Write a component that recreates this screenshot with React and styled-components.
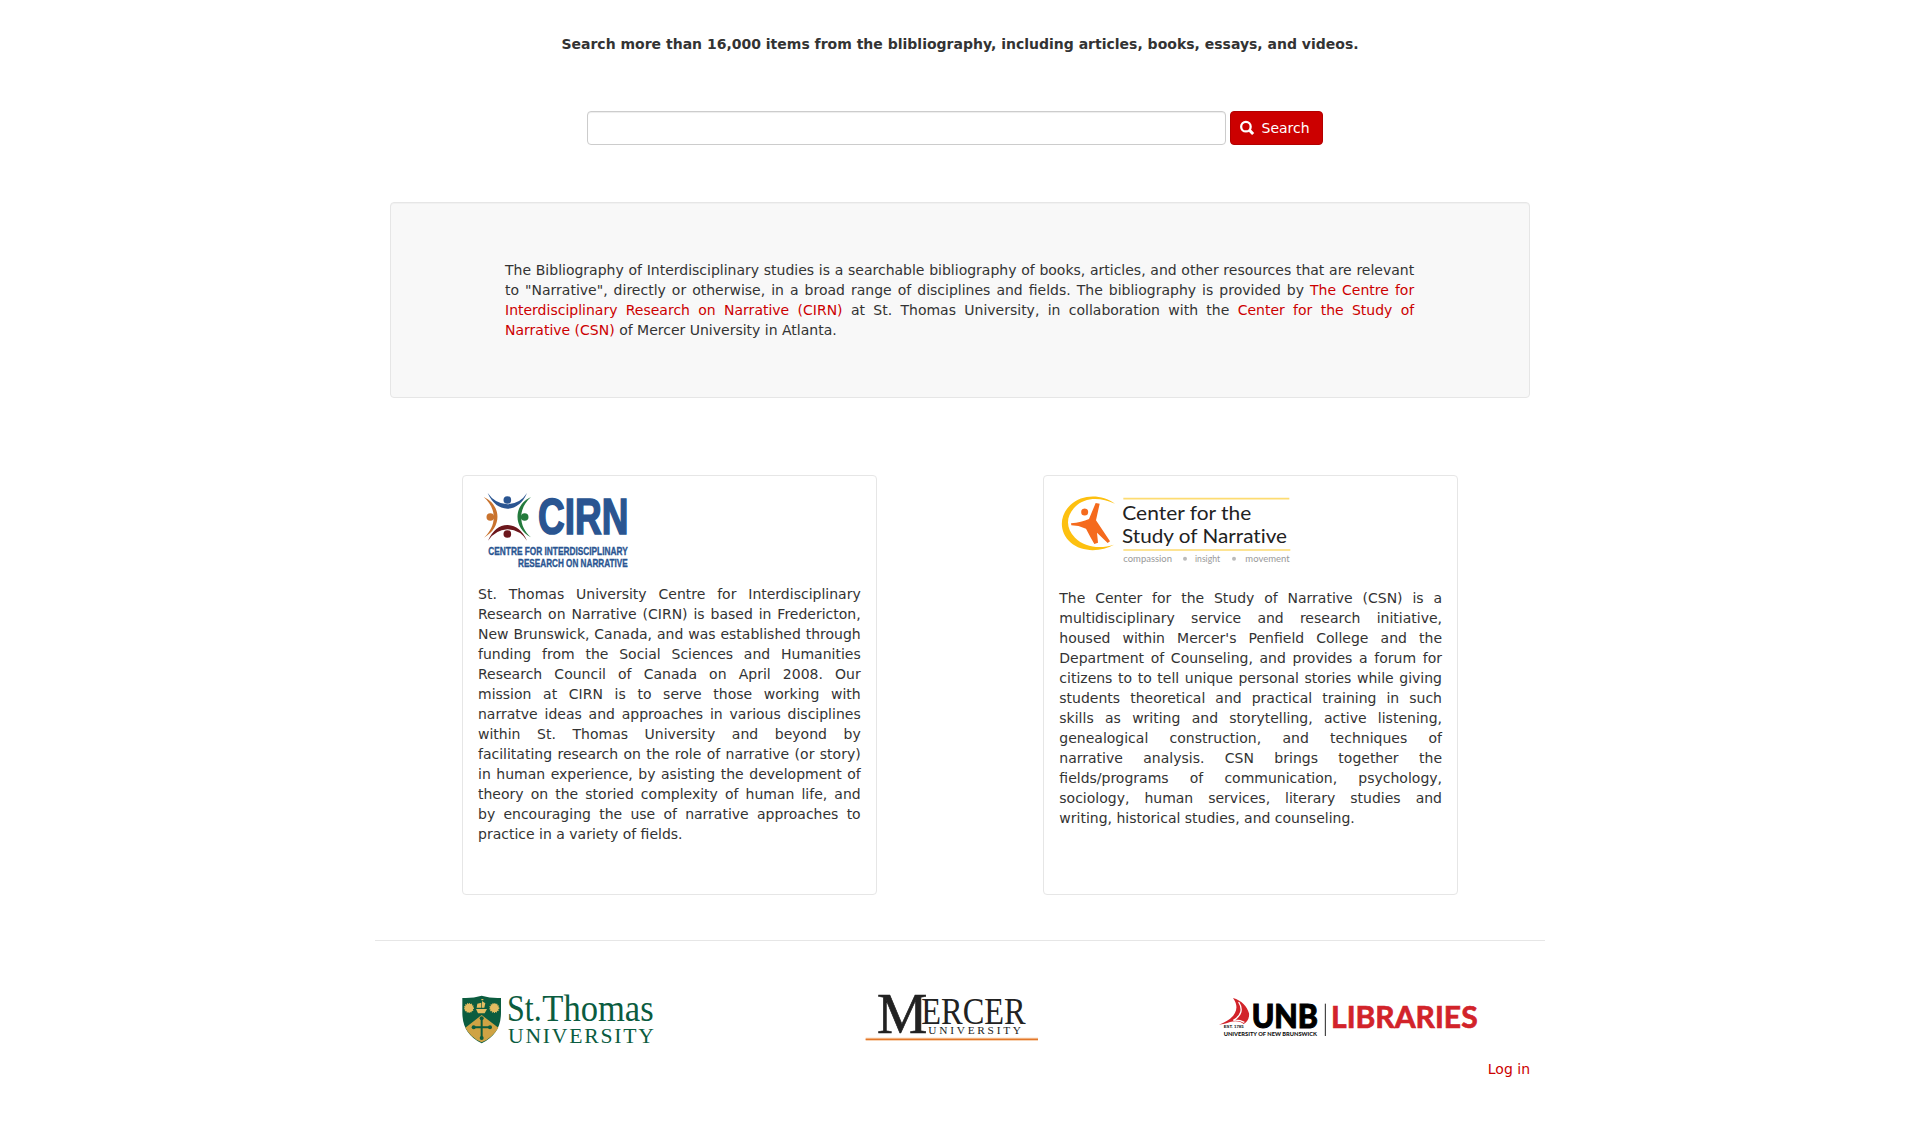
import React from "react";
import styled, { createGlobalStyle } from "styled-components";

const GlobalStyle = createGlobalStyle`
  *, *::before, *::after { box-sizing: border-box; }
  body {
    margin: 0;
    background: #fff;
    color: #333;
    font: 14px/20px "DejaVu Sans", sans-serif;
  }
`;

const Container = styled.main`
  width: 1170px;
  margin: 0 auto;
  padding: 34px 15px 0;
`;

const Tagline = styled.p`
  margin: 0;
  text-align: center;
  font-weight: bold;
`;

const SearchForm = styled.form`
  display: flex;
  gap: 4px;
  margin: 57px 0;
  padding-left: 197px;
`;

const SearchInput = styled.input`
  width: 639px;
  height: 34px;
  padding: 6px 12px;
  border: 1px solid #ccc;
  border-radius: 4px;
  background: #fff;
  box-shadow: inset 0 1px 1px rgba(0, 0, 0, 0.075);
  font: inherit;
`;

const SearchButton = styled.button`
  display: flex;
  align-items: center;
  gap: 7.5px;
  width: 93px;
  height: 34px;
  padding: 0 0 0 9px;
  border: 1px solid #b30000;
  border-radius: 4px;
  background: #c00;
  color: #fff;
  font: inherit;
`;

const Link = styled.a`
  color: #c00;
  text-decoration: none;
`;

const Well = styled.section`
  padding: 57px 114.8px 57px 114px;
  border: 1px solid #e6e6e6;
  border-radius: 4px;
  background: #f8f8f8;
  box-shadow: inset 0 1px 1px rgba(0, 0, 0, 0.03);
`;

const Paragraph = styled.p`
  margin: 0;
  text-align: justify;
`;

const Cards = styled.div`
  display: flex;
  justify-content: space-between;
  margin-top: 77px;
  padding: 0 72px;
`;

const Card = styled.article`
  display: flex;
  flex-direction: column;
  align-items: flex-start;
  gap: ${(p) => p.$gap}px;
  width: 414.7px;
  height: 420px;
  padding: 15px;
  border: 1px solid #e6e6e6;
  border-radius: 4px;
`;

const Divider = styled.hr`
  height: 1px;
  margin: 45px -15px 52px;
  border: 0;
  background: #e6e6e6;
`;

const Partners = styled.div`
  display: grid;
  grid-template-columns: 403px 354px 259px;
  padding-left: 72px;
`;

const Logo = styled.svg`
  display: block;
  flex: none;
  width: ${(p) => p.$w}px;
  height: ${(p) => p.$h}px;
  overflow: visible;
  font-variant-ligatures: none;
`;

const LoginRow = styled.div`
  margin-top: 14px;
  text-align: right;
`;

function Word({ x, y, w, size, font = "Liberation Sans", weight = 400, fill, children }) {
  return (
    <text
      x={x}
      y={y}
      textLength={w}
      lengthAdjust="spacingAndGlyphs"
      fontFamily={`"${font}", sans-serif`}
      fontSize={size}
      fontWeight={weight}
      fill={fill}
    >
      {children}
    </text>
  );
}

function SearchIcon() {
  return (
    <Logo $w={14} $h={14} viewBox="0 0 13.5 13.5" aria-hidden="true">
      <circle cx="5.7" cy="5.5" r="4.6" fill="none" stroke="#fff" strokeWidth="2.2" />
      <path d="M8.8 8.6l3.9 3.9" stroke="#fff" strokeWidth="2.9" />
    </Logo>
  );
}

function CirnLogo() {
  return (
    <Logo $w={152} $h={77} viewBox="54 63 456 231" role="img" aria-label="CIRN">
      <path d="M83 69Q105 101 142 103Q181 101 201 69Q181 115 142 116Q104 115 83 69Z" fill="#2a5591" />
      <path d="M71 81C126 106 126 173 72 203C110 169 112 116 71 81Z" fill="#c9732e" />
      <path d="M213 81C159 106 159 173 213 202C175 169 173 116 213 81Z" fill="#237a3c" />
      <path d="M84 212Q105 166 142 165Q180 166 201 212Q181 180 142 178Q106 180 84 212Z" fill="#6c171c" />
      <circle cx="142" cy="90" r="11.5" fill="#2a5591" />
      <circle cx="91" cy="141" r="11.5" fill="#c9732e" />
      <circle cx="194" cy="141" r="11.5" fill="#237a3c" />
      <circle cx="142" cy="192" r="11.5" fill="#6c171c" />
      <g stroke="#2a5591" strokeWidth="5">
        <Word x={234} y={192} w={271} size={150} weight={700} fill="#2a5591">CIRN</Word>
      </g>
      <g stroke="#2a5591" strokeWidth="1">
        <Word x={85} y={256} w={418} size={31} weight={700} fill="#2a5591">CENTRE FOR INTERDISCIPLINARY</Word>
        <Word x={174} y={290} w={329} size={31} weight={700} fill="#2a5591">RESEARCH ON NARRATIVE</Word>
      </g>
    </Logo>
  );
}

function CsnLogo() {
  return (
    <Logo $w={233} $h={80} viewBox="57 63 699 240" role="img" aria-label="Center for the Study of Narrative">
      <path d="M225 101C184 72 127 72 91 105C56 138 58 187 91 217C127 249 185 245 222 224C180 238 134 232 105 203C77 174 77 139 105 111C136 80 182 82 225 101Z" fill="#fdc010" />
      <circle cx="134" cy="126" r="10.5" fill="#f56a1d" />
      <path d="M167 99L179 101L168 151L210 214L203 219L171 188L174 218L163 222Q151 201 138 176Q115 166 94 166L93 160Q125 157 147 147Z" fill="#f56a1d" />
      <path d="M250 86H748M250 240H751" stroke="#fddc72" strokeWidth="5" />
      <Word x={247} y={150} w={387} size={59} font="Lato" fill="#222">Center for the</Word>
      <Word x={246} y={219} w={495} size={59} font="Lato" fill="#222">Study of Narrative</Word>
      <Word x={250} y={276} w={146} size={26} font="Lato" fill="#999">compassion</Word>
      <Word x={465} y={276} w={75} size={26} font="Lato" fill="#999">insight</Word>
      <Word x={616} y={276} w={133} size={26} font="Lato" fill="#999">movement</Word>
      <circle cx="435" cy="266" r="6" fill="#bbb" />
      <circle cx="582" cy="266" r="6" fill="#bbb" />
    </Logo>
  );
}

function StThomasLogo() {
  const green = "#0b5c3f";
  const gold = "#cfa344";
  return (
    <Logo $w={193} $h={52} viewBox="36 39 579 156" role="img" aria-label="St. Thomas University">
      <path d="M37 54Q67 56 95 47Q124 56 153 54V98Q153 162 95 190Q37 162 37 98Z" fill={green} />
      <path d="M95 105L145 143Q128 173 95 187Q62 173 46 143Z" fill={gold} />
      <g fill="#e3bd62" stroke="#e3bd62" strokeWidth="4" strokeDasharray="3 3">
        <circle cx="57" cy="84" r="13" />
        <circle cx="133" cy="84" r="13" />
      </g>
      <path d="M78 87H111L104 100H84ZM82 71L94 68V83H80ZM96 63L106 70L103 83H96ZM94 57h6v4h-6z" fill="#e3bd62" />
      <path d="M95 112V178M70 142H121" stroke={green} strokeWidth="6" />
      <g fill={green}>
        <circle cx="95" cy="115" r="6" />
        <circle cx="71" cy="142" r="6" />
        <circle cx="120" cy="142" r="6" />
        <circle cx="95" cy="174" r="6" />
      </g>
      <Word x={171} y={123} w={104} size={112} font="Liberation Serif" fill={green}>St.</Word>
      <Word x={277} y={123} w={334} size={112} font="Liberation Serif" fill={green}>Thomas</Word>
      <text x="174" y="190" textLength="438" fontFamily='"Liberation Serif", serif' fontSize="65" fill={green}>
        UNIVERSITY
      </text>
    </Logo>
  );
}

function MercerLogo() {
  return (
    <Logo $w={174} $h={52} viewBox="45 39 522 156" role="img" aria-label="Mercer University">
      <g stroke="#222" strokeWidth="2">
        <Word x={81} y={160} w={151} size={170} font="Liberation Serif" fill="#222">M</Word>
      </g>
      <Word x={214} y={131} w={313} size={114} font="Liberation Serif" fill="#222">ERCER</Word>
      <text x="235" y="161" textLength="278" fontFamily='"Liberation Serif", serif' fontSize="34" fill="#222">
        UNIVERSITY
      </text>
      <path d="M47 178H564" stroke="#f6c59b" strokeWidth="9" />
      <path d="M47 178H564" stroke="#e2772b" strokeWidth="4" />
    </Logo>
  );
}

function UnbLogo() {
  return (
    <Logo $w={259} $h={52} viewBox="57 39 777 156" role="img" aria-label="UNB Libraries">
      <path d="M99 54C125 61 141 79 147 100C149 116 140 128 131 132C125 125 107 121 90 126C79 130 68 133 57 134C93 122 127 92 99 54Z" fill="#d2232a" />
      <path d="M116 66C130 88 124 108 100 121Q118 119 133 127" fill="none" stroke="#fff" strokeWidth="4" />
      <Word x={71} y={143} w={60} size={13} weight={700} fill="#111">EST. 1785</Word>
      <g stroke="#000" strokeWidth="3">
        <Word x={155} y={143} w={199} size={97} font="Lato" weight={900} fill="#000">UNB</Word>
      </g>
      <Word x={71} y={167} w={280} size={17} font="Lato" weight={900} fill="#111">UNIVERSITY OF NEW BRUNSWICK</Word>
      <path d="M376 71V168" stroke="#222" strokeWidth="3" />
      <g stroke="#d2232a" strokeWidth="2">
        <Word x={393} y={143} w={440} size={94} font="Lato" weight={700} fill="#d2232a">LIBRARIES</Word>
      </g>
    </Logo>
  );
}

export default function App() {
  return (
    <>
      <GlobalStyle />
      <Container>
        <Tagline>Search more than 16,000 items from the blibliography, including articles, books, essays, and videos.</Tagline>
        <SearchForm>
          <SearchInput type="text" aria-label="Search terms" />
          <SearchButton type="button">
            <SearchIcon />
            Search
          </SearchButton>
        </SearchForm>
        <Well>
          <Paragraph>
            The Bibliography of Interdisciplinary studies is a searchable bibliography of books, articles, and other
            resources that are relevant to "Narrative", directly or otherwise, in a broad range of disciplines and
            fields. The bibliography is provided by{" "}
            <Link>The Centre for Interdisciplinary Research on Narrative (CIRN)</Link> at St. Thomas University, in
            collaboration with the <Link>Center for the Study of Narrative (CSN)</Link> of Mercer University in Atlanta.
          </Paragraph>
        </Well>
        <Cards>
          <Card $gap={16}>
            <CirnLogo />
            <Paragraph>
              St. Thomas University Centre for Interdisciplinary Research on Narrative (CIRN) is based in Fredericton,
              New Brunswick, Canada, and was established through funding from the Social Sciences and Humanities
              Research Council of Canada on April 2008. Our mission at CIRN is to serve those working with narratve
              ideas and approaches in various disciplines within St. Thomas University and beyond by facilitating
              research on the role of narrative (or story) in human experience, by asisting the development of theory
              on the storied complexity of human life, and by encouraging the use of narrative approaches to practice
              in a variety of fields.
            </Paragraph>
          </Card>
          <Card $gap={17}>
            <CsnLogo />
            <Paragraph>
              The Center for the Study of Narrative (CSN) is a multidisciplinary service and research initiative,
              housed within Mercer's Penfield College and the Department of Counseling, and provides a forum for
              citizens to to tell unique personal stories while giving students theoretical and practical training in
              such skills as writing and storytelling, active listening, genealogical construction, and techniques of
              narrative analysis. CSN brings together the fields/programs of communication, psychology, sociology,
              human services, literary studies and writing, historical studies, and counseling.
            </Paragraph>
          </Card>
        </Cards>
        <Divider />
        <Partners>
          <StThomasLogo />
          <MercerLogo />
          <UnbLogo />
        </Partners>
        <LoginRow>
          <Link>Log in</Link>
        </LoginRow>
      </Container>
    </>
  );
}
